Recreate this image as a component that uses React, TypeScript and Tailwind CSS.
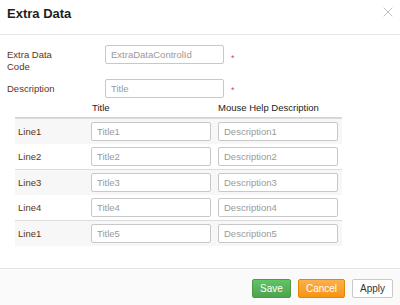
import { X } from 'lucide-react'

const lines = [
  { label: 'Line1', title: 'Title1', desc: 'Description1', row: 'h-[26px] border-t border-[#dcdcdc] bg-[#f7f7f7]' },
  { label: 'Line2', title: 'Title2', desc: 'Description2', row: 'h-[25px]' },
  { label: 'Line3', title: 'Title3', desc: 'Description3', row: 'h-[26px] border-t border-[#dcdcdc] bg-[#f7f7f7]' },
  { label: 'Line4', title: 'Title4', desc: 'Description4', row: 'h-[25px]' },
  { label: 'Line1', title: 'Title5', desc: 'Description5', row: 'h-[26px] border-t border-[#dcdcdc] bg-[#f7f7f7]' },
]

const inputClass =
  'h-[19px] rounded-[2px] border border-[#c8c8c8] bg-white pl-[5px] text-[9.5px] text-[#333] outline-none placeholder:text-[#9a9a9a]'

function Required() {
  return <span className="ml-[7px] text-[9px] leading-none text-[#e5484d]">*</span>
}

export default function App() {
  return (
    <div className="flex h-[305px] w-[400px] flex-col bg-white font-['Liberation_Sans',Arial,sans-serif] text-[9.5px]">
      <div className="flex h-[35px] items-start justify-between border-b border-[#e6e6e6] pl-[7px] pr-[4px] pt-[6px]">
        <h1 className="text-[13px] leading-[16px] font-bold text-[#1e1e1e]">Extra Data</h1>
        <X className="-mt-[2px] h-[16px] w-[16px] text-[#c0c0c0]" strokeWidth={1.5} />
      </div>

      <div className="flex-1 px-[7px] pt-[10px]">
        <div className="flex items-start">
          <label className="w-[98px] pt-[4px] leading-[12px] text-[#5a3520]">
            Extra Data
            <br />
            Code
          </label>
          <input className={`${inputClass} w-[119px]`} placeholder="ExtraDataControlId" />
          <span className="mt-[6px]">
            <Required />
          </span>
        </div>

        <div className="mt-[6px] flex items-center">
          <label className="w-[98px] leading-[12px] text-[#5a3520]">Description</label>
          <input className={`${inputClass} w-[119px]`} placeholder="Title" />
          <span className="mt-[3px]">
            <Required />
          </span>
        </div>

        <div className="ml-[8px] w-[327px]">
          <div className="flex h-[20px] items-end border-b border-[#d4d4d4] pb-[3px] leading-[12px] text-[#222]">
            <span className="w-[77px]" />
            <span className="w-[126px]">Title</span>
            <span>Mouse Help Description</span>
          </div>
          {lines.map((line, i) => (
            <div key={i} className={`flex items-start ${line.row}`}>
              <span className="w-[76px] pl-[3px] pt-[7px] leading-[12px] text-[#5a3520]">{line.label}</span>
              <input className={`${inputClass} mt-[3px] w-[120px]`} placeholder={line.title} />
              <input className={`${inputClass} mt-[3px] ml-[7px] w-[120px]`} placeholder={line.desc} />
            </div>
          ))}
        </div>
      </div>

      <div className="flex h-[37px] justify-end gap-[7px] border-t border-[#e3e3e3] bg-[#fafafa] pr-[7px] pt-[10px]">
        <button className="h-[19px] w-[39px] rounded-[2px] border border-[#4a9a4a] bg-gradient-to-b from-[#62c462] to-[#4ea24e] text-[10px] text-white">
          Save
        </button>
        <button className="h-[19px] w-[47px] rounded-[2px] border border-[#e0870a] bg-gradient-to-b from-[#fbb04a] to-[#f7930b] text-[10px] text-white">
          Cancel
        </button>
        <button className="h-[19px] w-[41px] rounded-[2px] border border-[#c9c9c9] bg-white text-[10px] text-[#333]">
          Apply
        </button>
      </div>
    </div>
  )
}
